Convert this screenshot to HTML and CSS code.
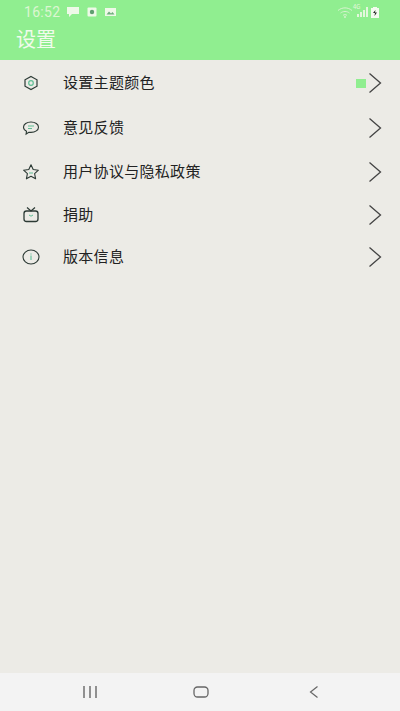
FILE: index.html
```html
<!DOCTYPE html>
<html lang="zh">
<head>
  <meta charset="UTF-8">
  <meta name="viewport" content="width=device-width, initial-scale=1.0">
  <title>设置</title>
  <link rel="stylesheet" href="styles.css">
</head>
<body>
  <div class="page">

    <!-- header -->
    <header class="header">
      <div class="status-bar">
        <div class="status-left">
          <span class="time">16:52</span>
          <svg width="14" height="12" viewBox="0 0 14 12"><path d="M1 1h12v7H6l-3 3V8H1z" fill="#eef9e8"/></svg>
          <svg class="status-gap" width="10" height="10" viewBox="0 0 10 10"><rect x="0.5" y="0.5" width="9" height="9" rx="1" fill="#eef9e8"/><circle cx="5" cy="5" r="2.2" fill="#5f9f70"/></svg>
          <svg class="status-gap" width="13" height="10" viewBox="0 0 12 10"><rect x="0.5" y="1" width="11" height="8" fill="#eef9e8"/><path d="M2 7.500l2.500-3 2 2 1.500-1.500L10 7.500z" fill="#6fae7d"/></svg>
        </div>
        <div class="status-right">
          <svg width="16" height="11" viewBox="0 0 16 11" fill="none" stroke="#d8f3cf" stroke-width="1"><path d="M1 3.500c4-3.500 10-3.500 14 0M3.500 6c2.500-2 6.500-2 9 0M6 8.300c1.200-.8 2.800-.8 4 0"/><circle cx="8" cy="10" r=".6" fill="#d8f3cf"/></svg>
          <span class="signal-wrap">
            <span class="net">4G</span>
            <svg width="12" height="10" viewBox="0 0 12 10"><path d="M1 10V7h2v3zM4 10V5h2v5zM7 10V3h2v7zM10 10V0h2v10z" fill="#e4f7dd"/></svg>
          </span>
          <svg width="8" height="11" viewBox="0 0 8 11"><path d="M2 0h4v1h2v10H0V1h2z" fill="#f4fbf0"/><path d="M4.500 3L2 6h2l-.5 3L6 5.500H4z" fill="#222"/></svg>
        </div>
      </div>
      <h1 class="title">设置</h1>
    </header>

    <!-- list -->
    <main class="list">
      <div class="row row-theme">
        <span class="icon">
          <svg width="20" height="20" viewBox="0 0 20 20" fill="none"><path d="M10 3.500l6 3.300v6.400l-6 3.300-6-3.300V6.800z" stroke="#2c3a35" stroke-width="1.200"/><circle cx="10" cy="10" r="2.300" stroke="#5fbf95" stroke-width="1.200"/></svg>
        </span>
        <span class="label">设置主题颜色</span>
        <span class="swatch"></span>
        <svg class="arrow" width="14" height="22" viewBox="0 0 14 22"><path d="M1.500 1.500L12.500 11 1.500 20.500" fill="none" stroke="#444" stroke-width="1.300"/></svg>
      </div>
      <div class="row row-feedback">
        <span class="icon">
          <svg width="20" height="20" viewBox="0 0 20 20" fill="none"><path d="M10 4c4.200 0 7.500 2.300 7.500 5.200S14.200 14.400 10 14.400c-.8 0-1.500-.1-2.200-.2l-2.700 1.800.4-2.800C3.800 12.300 2.500 10.900 2.500 9.200 2.500 6.300 5.800 4 10 4z" stroke="#2c3a35" stroke-width="1.100"/><path d="M7 8h6M7 10.500h4" stroke="#5fbf95" stroke-width="1"/></svg>
        </span>
        <span class="label">意见反馈</span>
        <svg class="arrow" width="14" height="22" viewBox="0 0 14 22"><path d="M1.500 1.500L12.500 11 1.500 20.500" fill="none" stroke="#444" stroke-width="1.300"/></svg>
      </div>
      <div class="row row-terms">
        <span class="icon">
          <svg width="20" height="20" viewBox="0 0 20 20" fill="none"><path d="M10 2.800l2.200 4.700 5.200.7-3.800 3.500 1 5.100-4.600-2.500-4.600 2.500 1-5.100-3.800-3.500 5.200-.7z" stroke="#2c3a35" stroke-width="1.100" stroke-linejoin="round"/><path d="M8 11h4" stroke="#5fbf95" stroke-width="1"/></svg>
        </span>
        <span class="label">用户协议与隐私政策</span>
        <svg class="arrow" width="14" height="22" viewBox="0 0 14 22"><path d="M1.500 1.500L12.500 11 1.500 20.500" fill="none" stroke="#444" stroke-width="1.300"/></svg>
      </div>
      <div class="row row-donate">
        <span class="icon">
          <svg width="20" height="20" viewBox="0 0 20 20" fill="none"><path d="M6 2.500L10 6l4-3.500" stroke="#2c3a35" stroke-width="1.200"/><rect x="3" y="6" width="14" height="10.500" rx="2.500" stroke="#2c3a35" stroke-width="1.300"/><path d="M8 10l2 1.200L12 10" stroke="#5fbf95" stroke-width="1"/></svg>
        </span>
        <span class="label">捐助</span>
        <svg class="arrow" width="14" height="22" viewBox="0 0 14 22"><path d="M1.500 1.500L12.500 11 1.500 20.500" fill="none" stroke="#444" stroke-width="1.300"/></svg>
      </div>
      <div class="row row-version">
        <span class="icon">
          <svg width="20" height="20" viewBox="0 0 20 20" fill="none"><ellipse cx="10" cy="10" rx="8" ry="7" stroke="#2c3a35" stroke-width="1.100"/><path d="M10 8.500v4.500" stroke="#5fbf95" stroke-width="1.100"/><path d="M10 6.500v1" stroke="#5fbf95" stroke-width="1.100"/></svg>
        </span>
        <span class="label">版本信息</span>
        <svg class="arrow" width="14" height="22" viewBox="0 0 14 22"><path d="M1.500 1.500L12.500 11 1.500 20.500" fill="none" stroke="#444" stroke-width="1.300"/></svg>
      </div>
    </main>

    <!-- nav bar -->
    <footer class="nav-bar">
      <svg width="16" height="12" viewBox="0 0 16 12"><path d="M2 0v12M8 0v12M14 0v12" stroke="#666" stroke-width="1.400"/></svg>
      <svg width="16" height="12" viewBox="0 0 16 12"><rect x="1" y="1" width="14" height="10" rx="3.500" fill="none" stroke="#666" stroke-width="1.300"/></svg>
      <svg class="nav-back" width="10" height="12" viewBox="0 0 10 12"><path d="M8.500 .5L1.500 6l7 5.500" fill="none" stroke="#666" stroke-width="1.200"/></svg>
    </footer>
  </div>
</body>
</html>
```

FILE: styles.css
```css
body {
  margin: 0;
  font-family: "Noto Sans CJK SC", "Liberation Sans", sans-serif;
  background-color: #ecebe6;
}

.page {
  display: flex;
  flex-direction: column;
  width: 400px;
  height: 711px;
  overflow: hidden;
}

/* header */
.header {
  height: 60px;
  flex-shrink: 0;
  background-color: #90ee90;
}

.status-bar {
  display: flex;
  justify-content: space-between;
  align-items: center;
  height: 24px;
  padding: 0 21px 0 24px;
}

.status-left, .status-right {
  display: flex;
  align-items: center;
}

.status-right {
  gap: 3px;
}

.time {
  width: 42px;
  font-family: Roboto, "Liberation Sans", sans-serif;
  font-size: 14px;
  letter-spacing: 0.3px;
  color: #dcf6d2;
}

.status-gap {
  margin-left: 7px;
}

.signal-wrap {
  position: relative;
  display: flex;
}

.net {
  position: absolute;
  top: -4px;
  left: -3px;
  font-size: 6px;
  line-height: 7px;
  color: #e4f7dd;
}

.title {
  margin: 0;
  padding: 1px 0 0 16px;
  font-size: 20px;
  font-weight: 400;
  line-height: 28px;
  color: #f1fbec;
}

/* list */
.list {
  flex: 1;
  padding-top: 1px;
}

.row {
  display: flex;
  align-items: center;
  padding: 0 18px 0 21px;
}

.row-theme { height: 44px; }
.row-feedback { height: 46px; }
.row-terms { height: 42px; }
.row-donate { height: 44px; }
.row-version { height: 40px; }

.icon {
  display: flex;
  width: 20px;
  height: 20px;
  margin-right: 22px;
}

.label {
  flex: 1;
  padding-bottom: 3px;
  font-size: 15px;
  line-height: 20px;
  letter-spacing: 0.3px;
  color: #222;
}

.swatch {
  width: 10px;
  height: 9px;
  margin-right: 2px;
  background-color: #90ee90;
}

.arrow {
  flex-shrink: 0;
}

/* nav bar */
.nav-bar {
  display: flex;
  align-items: center;
  gap: 95px;
  height: 38px;
  flex-shrink: 0;
  padding-left: 82px;
  background-color: #f3f3f3;
}

.nav-back {
  margin-left: 5px;
}
```
